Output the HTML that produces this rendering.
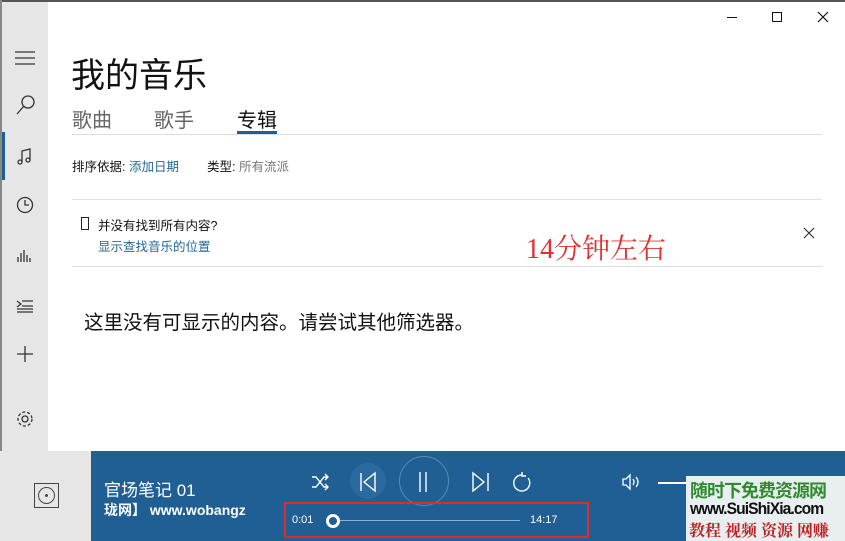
<!DOCTYPE html>
<html><head><meta charset="utf-8"><style>
*{margin:0;padding:0;box-sizing:border-box}
body{width:845px;height:541px;overflow:hidden;background:#fff;font-family:"Liberation Sans","Noto Sans CJK SC",sans-serif;position:relative}
.a{position:absolute;white-space:nowrap}
</style></head><body>
<div class="a" style="left:0;top:0;width:845px;height:2px;background:#555"></div>
<div class="a" style="left:0;top:2px;width:48px;height:449px;background:#e6e6e6"></div>
<div class="a" style="left:0;top:0;width:2px;height:451px;background:#888"></div>
<div class="a" style="left:2px;top:132px;width:3px;height:48px;background:#1f5f94"></div>
<svg class="a" style="left:0;top:0" width="48" height="451" fill="none" stroke="#333" stroke-width="1.3">
<path d="M15 52h20M15 58h20M15 64h20"/>
<circle cx="28" cy="102" r="6"/><path d="M24 106l-7 8"/>
<path d="M22 162v-11l8-2v11"/><circle cx="20" cy="162" r="2"/><circle cx="28" cy="160" r="2"/>
<circle cx="25" cy="205" r="7.5"/><path d="M25 200v5h4"/>
<path d="M18 262v-5M21 262v-9M24 262v-12M27 262v-7M30 262v-4"/>
<path d="M17 301l4 3-4 3M17 309h16M17 312h16M22 301h11M22 306h11"/>
<path d="M25 346v16M17 354h16"/>
<circle cx="25" cy="419" r="3"/><circle cx="25" cy="419" r="7" stroke-dasharray="3 2"/>
</svg>
<div class="a" style="left:727px;top:17px;width:10px;height:1px;background:#111"></div>
<div class="a" style="left:772px;top:12px;width:10px;height:10px;border:1px solid #111"></div>
<svg class="a" style="left:817px;top:11px" width="12" height="12" stroke="#111" stroke-width="1.2"><path d="M1 1l10 10M11 1L1 11"/></svg>

<div class="a" style="left:71px;top:48px;font-size:34px;color:#111">我的音乐</div>
<div class="a" style="left:72px;top:104px;font-size:20px;color:#666">歌曲</div>
<div class="a" style="left:154px;top:104px;font-size:20px;color:#666">歌手</div>
<div class="a" style="left:237px;top:104px;font-size:20px;color:#111">专辑</div>
<div class="a" style="left:72px;top:134px;width:750px;height:1px;background:#ddd"></div>
<div class="a" style="left:237px;top:131px;width:40px;height:3px;background:#1f5f94"></div>
<div class="a" style="left:72px;top:156px;font-size:12.5px;color:#111">排序依据: <span style="color:#1f6a96">添加日期</span></div>
<div class="a" style="left:207px;top:156px;font-size:12.5px;color:#111">类型: <span style="color:#777">所有流派</span></div>
<div class="a" style="left:72px;top:199px;width:750px;height:1px;background:#e2e2e2"></div>
<div class="a" style="left:81px;top:217px;width:8px;height:13px;border:1.3px solid #222"></div>
<div class="a" style="left:98px;top:215px;font-size:12.5px;color:#111">并没有找到所有内容?</div>
<div class="a" style="left:98px;top:236px;font-size:12.5px;color:#1f6a96">显示查找音乐的位置</div>
<div class="a" style="left:526px;top:227px;font-size:28px;color:#e03030;font-family:'Liberation Serif','Noto Serif CJK SC',serif">14分钟左右</div>
<svg class="a" style="left:803px;top:227px" width="12" height="12" stroke="#333" stroke-width="1.2"><path d="M1 1l10 10M11 1L1 11"/></svg>
<div class="a" style="left:72px;top:266px;width:750px;height:1px;background:#ddd"></div>
<div class="a" style="left:84px;top:306px;font-size:19.5px;color:#111">这里没有可显示的内容。请尝试其他筛选器。</div>

<div class="a" style="left:0;top:451px;width:91px;height:90px;background:#e6e6e6"></div>
<div class="a" style="left:34px;top:483px;width:25px;height:25px;border:1.5px solid #444"></div>
<div class="a" style="left:38px;top:487px;width:17px;height:17px;border:1.3px solid #444;border-radius:50%"></div>
<div class="a" style="left:45px;top:494px;width:3px;height:3px;background:#444;border-radius:50%"></div>
<div class="a" style="left:91px;top:451px;width:754px;height:90px;background:#1f5f94"></div>
<div class="a" style="left:104px;top:476px;font-size:17px;color:#fff">官场笔记 01</div>
<div class="a" style="left:104px;top:500px;font-size:14px;color:#fff;font-weight:bold">珑网】 www.wobangz</div>
<div class="a" style="left:350px;top:463px;width:36px;height:36px;border-radius:50%;background:#2a6a9e"></div>
<div class="a" style="left:399px;top:456px;width:50px;height:50px;border-radius:50%;border:1.5px solid #5b8ab5"></div>
<svg class="a" style="left:300px;top:465px" width="250" height="34" fill="none" stroke="#fff" stroke-width="1.4">
<path d="M12 12h4l8 10h4M12 22h4l8-10h4M25 9l3 3-3 3M25 19l3 3-3 3"/>
<path d="M61 8v18M75 8L64 17l11 9z"/>
<path d="M120 7v20M126 7v20"/>
<path d="M173 8l11 9-11 9zM188 8v18"/>
<path d="M222 10a8 8 0 1 0 6 3M222 7v4h4"/>
</svg>
<svg class="a" style="left:620px;top:472px" width="24" height="20" fill="none" stroke="#fff" stroke-width="1.3"><path d="M3 7h3l4-4v14l-4-4H3z M13 7q2 3 0 6 M16 5q4 5 0 10"/></svg>
<div class="a" style="left:658px;top:482px;width:30px;height:2px;background:#fff"></div>
<div class="a" style="left:284px;top:502px;width:305px;height:36px;border:2px solid #e02b2b"></div>
<div class="a" style="left:292px;top:514px;font-size:11px;color:#fff">0:01</div>
<div class="a" style="left:326px;top:514px;width:14px;height:14px;border-radius:50%;border:3px solid #fff"></div>
<div class="a" style="left:340px;top:520px;width:180px;height:1px;background:#8fb0cf"></div>
<div class="a" style="left:530px;top:514px;font-size:11px;color:#fff">14:17</div>
<div class="a" style="left:686px;top:476px;width:159px;height:65px;background:#e9eef0"></div>
<div class="a" style="left:690px;top:477px;font-size:18px;font-weight:bold;color:#2f8a2f;font-family:'Noto Sans CJK SC',sans-serif;letter-spacing:-1px">随时下免费资源网</div>
<div class="a" style="left:690px;top:499px;font-size:17px;font-weight:bold;color:#111;letter-spacing:-1px;transform:scaleX(0.92);transform-origin:left">www.SuiShiXia.com</div>
<div class="a" style="left:689px;top:518px;font-size:16px;font-weight:bold;color:#c02020;font-family:'Noto Serif CJK SC',serif">教程 视频 资源 网赚</div>
</body></html>
